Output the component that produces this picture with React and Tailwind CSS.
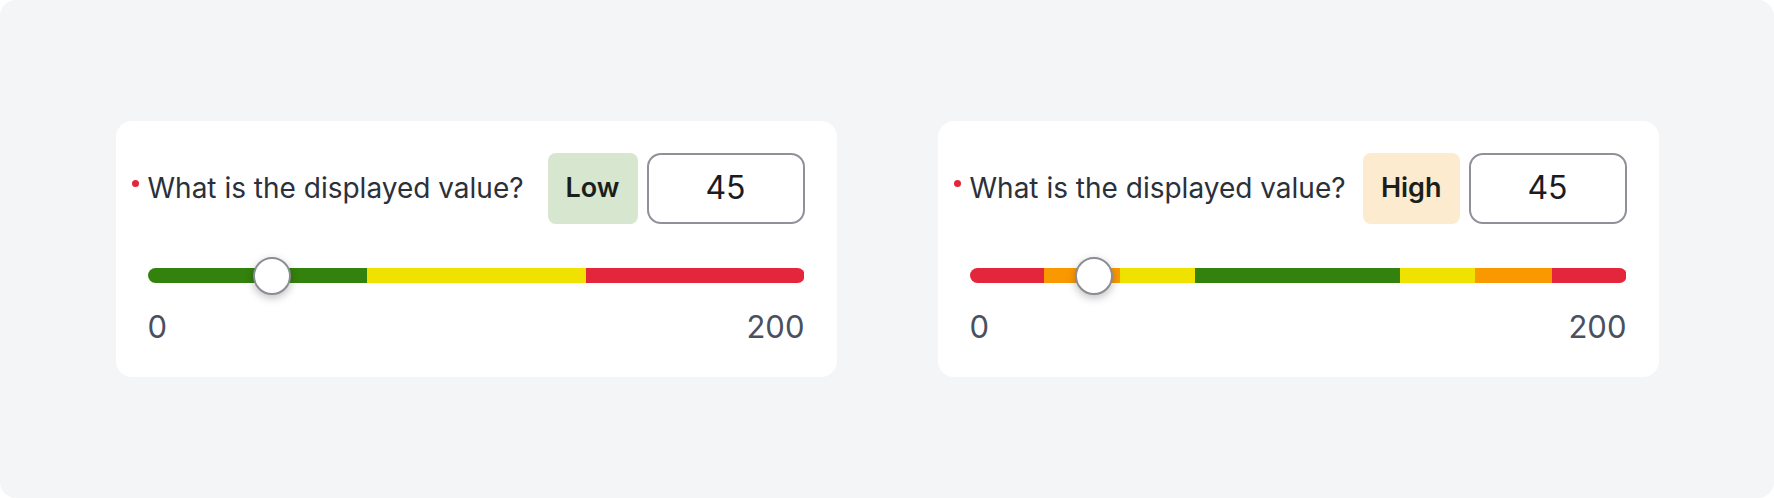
import React from 'react'

const GREEN = 'bg-[#33820d]'
const YELLOW = 'bg-[#efe200]'
const ORANGE = 'bg-[#fa9800]'
const RED = 'bg-[#e3263c]'

// Slider segments, widths in percent of the track
const lowBands = [
  { w: 33.34, c: GREEN },
  { w: 33.33, c: YELLOW },
  { w: 33.33, c: RED },
]

const highBands = [
  { w: 11.4, c: RED },
  { w: 11.5, c: ORANGE },
  { w: 11.4, c: YELLOW },
  { w: 31.3, c: GREEN },
  { w: 11.4, c: YELLOW },
  { w: 11.6, c: ORANGE },
  { w: 11.4, c: RED },
]

function ValueCard({ level, badgeClass, bands, value }) {
  return (
    <div className="w-[721px] rounded-[16px] bg-white px-8 pt-8 pb-[32px]">
      {/* Question row */}
      <div className="flex h-[71px] items-center justify-between">
        <div className="relative text-[28px] leading-[1.2] text-[#2b303b]">
          <span className="absolute left-[-16px] top-[8px] h-[7px] w-[7px] rounded-full bg-[#e3263c]"></span>
          What is the displayed value?
        </div>
        <div className="flex h-full items-stretch gap-[9px]">
          <div className={`flex items-center rounded-[8px] px-[18px] text-[27px] font-semibold text-[#1b1f1b] ${badgeClass}`}>
            {level}
          </div>
          <div className="flex w-[158px] items-center justify-center rounded-[14px] border-2 border-[#8f9099] bg-white text-[32px] text-[#1c1c1e]">
            {value}
          </div>
        </div>
      </div>

      {/* Slider */}
      <div className="relative mt-[33px] flex h-[38px] items-center">
        <div className="flex h-[15px] w-full overflow-hidden rounded-full">
          {bands.map((b, i) => (
            <div key={i} className={`h-full ${b.c}`} style={{ width: `${b.w}%` }}></div>
          ))}
        </div>
        <div className="absolute left-[18.9%] top-0 h-[38px] w-[38px] -translate-x-1/2 rounded-full border-2 border-[#8c8d94] bg-white shadow-[0_3px_8px_rgba(0,0,0,0.25)]"></div>
      </div>

      {/* Range labels */}
      <div className="mt-[13px] flex justify-between text-[31px] leading-[1.2] text-[#4a505e]">
        <span>0</span>
        <span>200</span>
      </div>
    </div>
  )
}

export default function App() {
  return (
    <div className="bg-white" style={{ fontFamily: 'Inter, "Noto Sans", sans-serif' }}>
      <div className="flex h-[498px] w-full items-center justify-center gap-[101px] rounded-[16px] bg-[#f4f5f7]">
        <ValueCard level="Low" badgeClass="bg-[#d6e6cf]" bands={lowBands} value="45" />
        <ValueCard level="High" badgeClass="bg-[#fdebd0]" bands={highBands} value="45" />
      </div>
    </div>
  )
}
